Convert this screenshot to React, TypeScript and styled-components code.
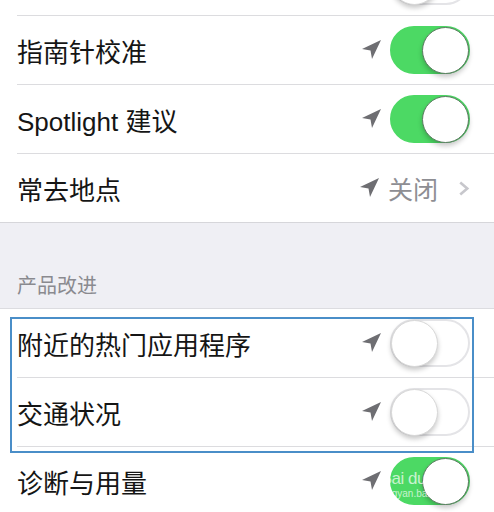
import React from 'react'
import styled, { createGlobalStyle } from 'styled-components'

const GlobalStyle = createGlobalStyle`
    body {
        margin: 0;
        background: #ffffff;
        font-family: "Liberation Sans", "Noto Sans CJK SC", sans-serif;
        -webkit-font-smoothing: antialiased;
    }
`

type RowData = {
    label: string
    on?: boolean
    value?: string
}

const topRows: RowData[] = [
    { label: '', on: false },
    { label: '指南针校准', on: true },
    { label: 'Spotlight 建议', on: true },
    { label: '常去地点', value: '关闭' },
]

const improveRows: RowData[] = [
    { label: '附近的热门应用程序', on: false },
    { label: '交通状况', on: false },
    { label: '诊断与用量', on: true },
]

function LocationArrow(): JSX.Element {
    return (
        <ArrowIcon viewBox="0 0 24 24" width="24" height="24">
            <polygon points="3 11 22 2 13 21 11.5 12.5 3 11" fill="#6e6e72" />
        </ArrowIcon>
    )
}

function Chevron(): JSX.Element {
    return (
        <ChevronIcon viewBox="0 0 12 16" width="12" height="15">
            <polyline
                points="2 1.5 9.5 8 2 14.5"
                fill="none"
                stroke="#c7c7cc"
                strokeWidth="2.8"
            />
        </ChevronIcon>
    )
}

function SettingRow({ row, last }: { row: RowData; last: boolean }): JSX.Element {
    return (
        <Row $last={last}>
            <Label>{row.label}</Label>
            <Accessory>
                {row.label && <LocationArrow />}
                {row.value !== undefined ? (
                    <>
                        <Value>{row.value}</Value>
                        <Chevron />
                    </>
                ) : (
                    <Switch $on={!!row.on}>
                        <Knob $on={!!row.on} />
                    </Switch>
                )}
            </Accessory>
        </Row>
    )
}

export default function App(): JSX.Element {
    return (
        <Page>
            <GlobalStyle />
            <List>
                <Section>
                    {topRows.map((row, i) => (
                        <SettingRow key={i} row={row} last={i === topRows.length - 1} />
                    ))}
                </Section>
                <GroupHeader>产品改进</GroupHeader>
                <Section $top>
                    {improveRows.map((row, i) => (
                        <SettingRow
                            key={i}
                            row={row}
                            last={i === improveRows.length - 1}
                        />
                    ))}
                    <Highlight />
                    <Watermark>
                        <WatermarkBig>Bai du 经验</WatermarkBig>
                        <WatermarkSmall>jingyan.baidu.com</WatermarkSmall>
                    </Watermark>
                </Section>
            </List>
        </Page>
    )
}

const Page = styled.div`
    width: 494px;
    height: 512px;
    overflow: hidden;
    background: #ffffff;
`

const List = styled.div`
    margin-top: -53px;
    display: flex;
    flex-direction: column;
`

const Section = styled.div<{ $top?: boolean }>`
    position: relative;
    background: #ffffff;
    border-top: ${(p) => (p.$top ? '1px solid #dcdce0' : 'none')};
    border-bottom: 1px solid #d6d6da;
`

const Row = styled.div<{ $last: boolean }>`
    height: 68px;
    margin-left: 17px;
    padding-right: 24px;
    display: flex;
    align-items: center;
    justify-content: space-between;
    border-bottom: ${(p) => (p.$last ? 'none' : '1px solid #dcdcdf')};
`

const Label = styled.span`
    font-size: 26px;
    color: #151515;
    white-space: nowrap;
`

const Accessory = styled.div`
    display: flex;
    align-items: center;
`

const ArrowIcon = styled.svg`
    display: block;
    margin-right: 7px;
`

const Value = styled.span`
    font-size: 25px;
    color: #8e8e93;
    margin-right: 20px;
`

const ChevronIcon = styled.svg`
    display: block;
`

const Switch = styled.div<{ $on: boolean }>`
    position: relative;
    width: 80px;
    height: 48px;
    box-sizing: border-box;
    border-radius: 24px;
    background: ${(p) => (p.$on ? '#4cd964' : '#ffffff')};
    border: 2px solid ${(p) => (p.$on ? '#4cd964' : '#e4e4e7')};
    display: flex;
    align-items: center;
    justify-content: ${(p) => (p.$on ? 'flex-end' : 'flex-start')};
`

const Knob = styled.div<{ $on: boolean }>`
    width: 45px;
    height: 45px;
    flex: none;
    margin: 0 -1px;
    border-radius: 50%;
    background: #ffffff;
    border: 1px solid ${(p) => (p.$on ? '#5b7a60' : '#d8d8d8')};
    box-shadow: 0 3px 5px rgba(0, 0, 0, 0.22);
`

const GroupHeader = styled.div`
    height: 85px;
    box-sizing: border-box;
    background: #efeff4;
    padding: 0 0 12px 17px;
    display: flex;
    align-items: flex-end;
    font-size: 20px;
    line-height: 20px;
    color: #8a8a8f;
`

const Highlight = styled.div`
    position: absolute;
    top: 8px;
    left: 10px;
    width: 464px;
    height: 136px;
    box-sizing: border-box;
    border: 2px solid #4a8ec8;
    pointer-events: none;
`

const Watermark = styled.div`
    position: absolute;
    top: 161px;
    left: 380px;
    width: 84px;
    display: flex;
    flex-direction: column;
    align-items: center;
    color: rgba(255, 255, 255, 0.7);
    white-space: nowrap;
    pointer-events: none;
`

const WatermarkBig = styled.span`
    font-size: 17px;
    line-height: 18px;
    letter-spacing: -0.5px;
`

const WatermarkSmall = styled.span`
    font-size: 10px;
    line-height: 12px;
`
